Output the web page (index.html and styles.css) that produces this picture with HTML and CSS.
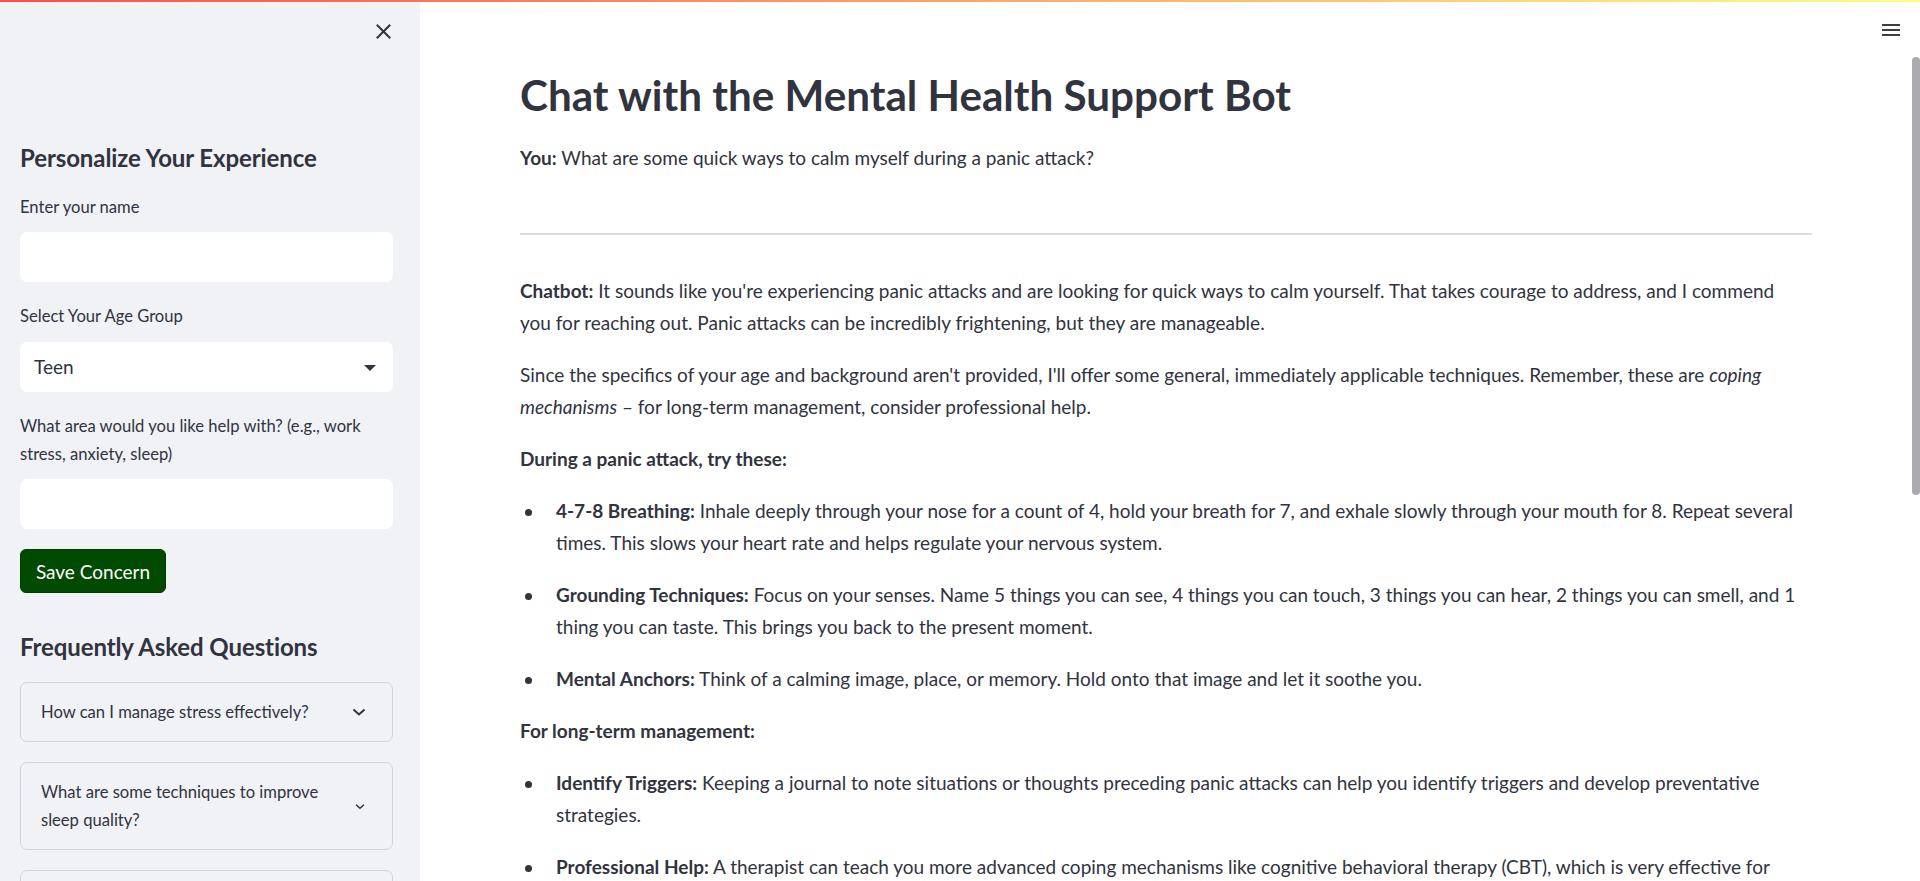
FILE: index.html
```html
<!DOCTYPE html>
<html lang="en">
<head>
<meta charset="utf-8">
<title>Mental Health Support Bot</title>
<link rel="stylesheet" href="styles.css">
</head>
<body>
<div class="decoration"></div>
<div class="app">
  <aside class="sidebar">
    <div class="sb-header">
      <button class="icon-btn close-btn" aria-label="Close sidebar">
        <svg width="15" height="15" viewBox="0 0 15 15"><path d="M1.5 1.5 L13.5 13.5 M13.5 1.5 L1.5 13.5" stroke="#31333f" stroke-width="2" stroke-linecap="square" fill="none"/></svg>
      </button>
    </div>

    <h2 class="sb-title first">Personalize Your Experience</h2>

    <div class="field">
      <label class="field-label">Enter your name</label>
      <div class="text-input"></div>
    </div>

    <div class="field">
      <label class="field-label">Select Your Age Group</label>
      <div class="select">
        <span class="select-value">Teen</span>
        <svg class="caret" width="12" height="6" viewBox="0 0 12 6"><path d="M0 0 L12 0 L6 6 Z" fill="#31333f"/></svg>
      </div>
    </div>

    <div class="field">
      <label class="field-label">What area would you like help with? (e.g., work stress, anxiety, sleep)</label>
      <div class="text-input"></div>
    </div>

    <button class="save-btn">Save Concern</button>

    <h2 class="sb-title faq-title">Frequently Asked Questions</h2>

    <div class="expanders">
      <div class="expander">
        <span class="exp-text">How can I manage stress effectively?</span>
        <svg class="chev" width="14" height="8" viewBox="0 0 14 8"><path d="M1.5 1.5 L7 6.5 L12.5 1.5" stroke="#31333f" stroke-width="2" fill="none"/></svg>
      </div>
      <div class="expander">
        <span class="exp-text">What are some techniques to improve sleep quality?</span>
        <svg class="chev small" width="10" height="7" viewBox="0 0 14 8"><path d="M1.5 1.5 L7 6.5 L12.5 1.5" stroke="#31333f" stroke-width="2.2" fill="none"/></svg>
      </div>
      <div class="expander">
        <span class="exp-text">How do I cope with feelings of anxiety?</span>
        <svg class="chev" width="14" height="8" viewBox="0 0 14 8"><path d="M1.5 1.5 L7 6.5 L12.5 1.5" stroke="#31333f" stroke-width="2" fill="none"/></svg>
      </div>
    </div>
  </aside>

  <main class="main">
    <div class="toolbar">
      <button class="icon-btn menu-btn" aria-label="Menu">
        <svg width="18" height="12" viewBox="0 0 18 12"><rect x="0" y="0" width="18" height="2" fill="#3b3d49"/><rect x="0" y="5" width="18" height="2" fill="#3b3d49"/><rect x="0" y="10" width="18" height="2" fill="#3b3d49"/></svg>
      </button>
    </div>
    <div class="scroll-thumb"></div>

    <div class="content">
      <h1 class="page-title">Chat with the Mental Health Support Bot</h1>
      <p class="you-msg"><strong>You:</strong> What are some quick ways to calm myself during a panic attack?</p>
      <hr class="divider">

      <div class="bot-msg">
        <p><strong>Chatbot:</strong> It sounds like you're experiencing panic attacks and are looking for quick ways to calm yourself. That takes courage to address, and I commend<br>you for reaching out. Panic attacks can be incredibly frightening, but they are manageable.</p>
        <p>Since the specifics of your age and background aren't provided, I'll offer some general, immediately applicable techniques. Remember, these are <em>coping<br>mechanisms</em> – for long-term management, consider professional help.</p>
        <p><strong>During a panic attack, try these:</strong></p>
        <ul class="bullets">
          <li><p><strong>4-7-8 Breathing:</strong> Inhale deeply through your nose for a count of 4, hold your breath for 7, and exhale slowly through your mouth for 8. Repeat several<br>times. This slows your heart rate and helps regulate your nervous system.</p></li>
          <li><p><strong>Grounding Techniques:</strong> Focus on your senses. Name 5 things you can see, 4 things you can touch, 3 things you can hear, 2 things you can smell, and 1<br>thing you can taste. This brings you back to the present moment.</p></li>
          <li><p><strong>Mental Anchors:</strong> Think of a calming image, place, or memory. Hold onto that image and let it soothe you.</p></li>
        </ul>
        <p><strong>For long-term management:</strong></p>
        <ul class="bullets">
          <li><p><strong>Identify Triggers:</strong> Keeping a journal to note situations or thoughts preceding panic attacks can help you identify triggers and develop preventative<br>strategies.</p></li>
          <li><p><strong>Professional Help:</strong> A therapist can teach you more advanced coping mechanisms like cognitive behavioral therapy (CBT), which is very effective for<br>panic disorder.</p></li>
        </ul>
      </div>
    </div>
  </main>
</div>
</body>
</html>
```
FILE: styles.css
```css
* { box-sizing: border-box; }

html, body {
  margin: 0;
  padding: 0;
  height: 100%;
  overflow: hidden;
}

body {
  font-family: "Lato", "Liberation Sans", sans-serif;
  color: #31333f;
  background: #ffffff;
}

.decoration {
  position: absolute;
  top: 0;
  left: 0;
  right: 0;
  height: 2px;
  background: linear-gradient(90deg, #ff4b4b, #fffd80);
  z-index: 10;
}

.app {
  display: flex;
  height: 100vh;
  overflow: hidden;
}

.icon-btn {
  border: 0;
  background: transparent;
  padding: 0;
  margin: 0;
  display: flex;
  align-items: center;
  justify-content: center;
  cursor: pointer;
}

/* ---------- Sidebar ---------- */
.sidebar {
  flex: 0 0 420px;
  background: #f0f2f6;
  padding: 0 27px 0 20px;
  overflow: hidden;
}

.sb-header {
  height: 62px;
  display: flex;
  justify-content: flex-end;
  align-items: center;
}

.close-btn {
  width: 15px;
  height: 15px;
  margin-right: 2px;
}

.sb-title {
  font-size: 24px;
  font-weight: 700;
  line-height: 28.8px;
  margin: 0;
  color: #31333f;
  letter-spacing: -0.1px;
}

.sb-title.first { margin-top: 82px; margin-bottom: 20px; }
.sb-title.faq-title { margin-top: 40px; margin-bottom: 20px; }

.field {
  display: flex;
  flex-direction: column;
  gap: 11.5px;
  margin-bottom: 20px;
}

.field-label {
  font-size: 16.6px;
  line-height: 28px;
  color: #31333f;
}

.text-input {
  height: 50px;
  background: #ffffff;
  border-radius: 7px;
}

.select {
  height: 50px;
  background: #ffffff;
  border-radius: 7px;
  display: flex;
  align-items: center;
  justify-content: space-between;
  padding: 0 17px 0 14px;
}

.select-value {
  font-size: 19px;
  line-height: 28px;
  padding-top: 1px;
}

.caret { display: block; margin-top: 2px; }

.save-btn {
  display: block;
  width: 146px;
  height: 44px;
  background: #014a01;
  border: 1px solid #013d01;
  border-radius: 6px;
  color: #ffffff;
  font-family: "Lato", "Liberation Sans", sans-serif;
  font-size: 19px;
  padding: 0;
}

.expanders {
  display: flex;
  flex-direction: column;
  gap: 20px;
}

.expander {
  border: 1px solid #d2d3d8;
  border-radius: 7px;
  padding: 15px 26px 15px 20px;
  display: flex;
  align-items: center;
  gap: 20px;
}

.exp-text {
  flex: 1;
  font-size: 16.6px;
  line-height: 28px;
}

.chev { display: block; flex: 0 0 auto; }
.chev.small { margin-right: 1px; }

/* ---------- Main ---------- */
.main {
  flex: 1;
  position: relative;
  padding: 70px 108px 0 100px;
  overflow: hidden;
}

.toolbar {
  position: absolute;
  top: 24px;
  right: 20px;
}

.menu-btn { width: 18px; height: 12px; }

.scroll-thumb {
  position: absolute;
  top: 57px;
  right: 0;
  width: 8px;
  height: 438px;
  background: #acacb0;
  border-radius: 4px;
}

.page-title {
  font-size: 42.2px;
  font-weight: 700;
  line-height: 50px;
  margin: 0 0 22px 0;
  color: #31333f;
}

.content p {
  font-size: 19px;
  line-height: 32px;
  margin: 0;
}

.you-msg { margin: 0; }

.divider {
  border: 0;
  height: 2px;
  background: #dcdcdf;
  margin: 59px 0 40px 0;
}

.bot-msg {
  display: flex;
  flex-direction: column;
  gap: 20px;
}

.bullets {
  list-style: none;
  margin: 0;
  padding: 0 0 0 36px;
  display: flex;
  flex-direction: column;
  gap: 20px;
}

.bullets li {
  position: relative;
}

.bullets li::before {
  content: "";
  position: absolute;
  left: -31px;
  top: 14px;
  width: 7px;
  height: 7px;
  border-radius: 50%;
  background: #31333f;
}

strong { font-weight: 700; }
em { font-style: italic; }
```
